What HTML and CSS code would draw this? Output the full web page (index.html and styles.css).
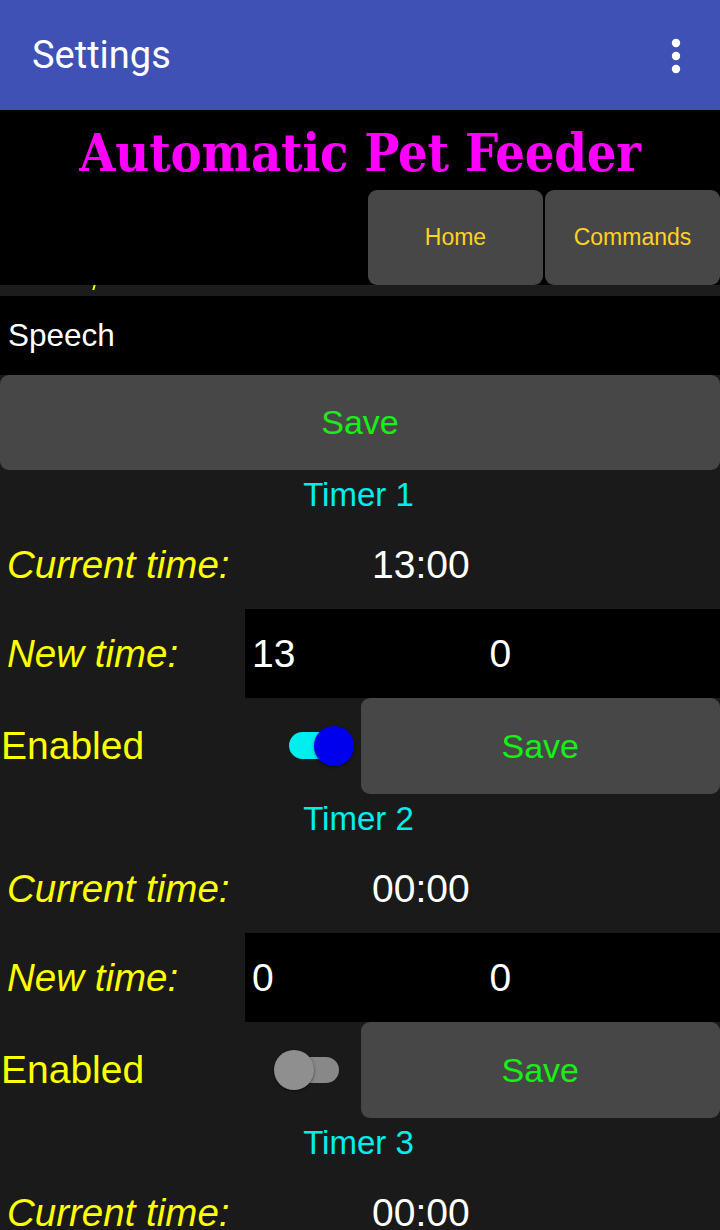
FILE: index.html
```html
<!DOCTYPE html>
<html>
<head>
<meta charset="utf-8">
<link rel="stylesheet" href="styles.css">
</head>
<body>
<header class="appbar">
  <span class="appbar-title">Settings</span>
  <svg class="menu" width="12" height="36" viewBox="0 0 12 36"><circle cx="6" cy="5" r="4.2" fill="#fff"/><circle cx="6" cy="18" r="4.2" fill="#fff"/><circle cx="6" cy="31" r="4.2" fill="#fff"/></svg>
</header>
<section class="hero">
  <h1 class="hero-title">Automatic Pet Feeder</h1>
  <nav class="nav">
    <button class="nav-btn">Home</button>
    <button class="nav-btn">Commands</button>
  </nav>
</section>
<div class="strip"><span class="tick"></span></div>
<div class="speech">Speech</div>
<button class="save-wide">Save</button>

<section class="timer">
  <div class="timer-title">Timer 1</div>
  <div class="row cur"><span class="lbl">Current time:</span><span class="val">13:00</span></div>
  <div class="row newt"><span class="lbl">New time:</span><div class="inputs"><span class="inp">13</span><span class="inp">0</span></div></div>
  <div class="row en"><span class="en-lbl">Enabled</span><span class="switch on"><span class="thumb"></span></span><button class="save">Save</button></div>
</section>

<section class="timer">
  <div class="timer-title">Timer 2</div>
  <div class="row cur"><span class="lbl">Current time:</span><span class="val">00:00</span></div>
  <div class="row newt"><span class="lbl">New time:</span><div class="inputs"><span class="inp">0</span><span class="inp">0</span></div></div>
  <div class="row en"><span class="en-lbl">Enabled</span><span class="switch off"><span class="thumb"></span></span><button class="save">Save</button></div>
</section>

<section class="timer">
  <div class="timer-title">Timer 3</div>
  <div class="row cur"><span class="lbl">Current time:</span><span class="val">00:00</span></div>
</section>
</body>
</html>
```
FILE: styles.css
```css
html, body { margin: 0; padding: 0; }
body {
  width: 720px;
  height: 1230px;
  overflow: hidden;
  background: #1a1a1a;
  font-family: "Liberation Sans", Arial, sans-serif;
}
.appbar {
  height: 110px;
  background: #3f51b5;
  display: flex;
  align-items: center;
  justify-content: space-between;
  padding: 0 38px 0 32px;
  box-sizing: border-box;
}
.appbar-title { color: #fff; font-family: Roboto, sans-serif; font-size: 38px; }
.menu { display: block; margin-top: 1px; }
.hero { background: #000; height: 175px; display: flex; flex-direction: column; }
.hero-title {
  margin: 0;
  height: 80px;
  line-height: 86px;
  text-align: center;
  color: #ff00ff;
  font-family: "DejaVu Serif Condensed", "DejaVu Serif", serif;
  font-weight: bold;
  font-size: 52px;
  letter-spacing: -0.2px;
}
.nav { display: flex; justify-content: flex-end; gap: 2px; }
.nav-btn {
  width: 175px;
  height: 95px;
  background: #474747;
  border: none;
  border-radius: 9px;
  color: #ffd21f;
  font-family: "Liberation Sans", Arial, sans-serif;
  font-size: 23px;
  padding: 0;
}
.strip { height: 11px; background: #1c1c1c; position: relative; }
.tick {
  position: absolute; left: 93px; top: 0;
  width: 2px; height: 5px; background: #ffff00; transform: skewX(-15deg);
}
.speech {
  height: 79px;
  background: #000;
  color: #fff;
  font-size: 31.5px;
  line-height: 79px;
  padding-left: 8px;
}
.save-wide, .save {
  background: #474747;
  border: none;
  border-radius: 9px;
  color: #17ef17;
  font-family: "Liberation Sans", Arial, sans-serif;
  font-size: 34px;
  padding: 0;
}
.save-wide { display: block; width: 720px; height: 95px; }
.timer-title {
  height: 50px;
  line-height: 50px;
  text-align: center;
  color: #00eeee;
  font-size: 33px;
  padding-right: 3px;
}
.row { display: flex; align-items: center; }
.cur { height: 89px; }
.lbl {
  width: 245px;
  box-sizing: border-box;
  padding-left: 7px;
  color: #ffff00;
  font-style: italic;
  font-size: 38.5px;
}
.val { color: #fff; font-size: 39px; padding-left: 127px; }
.newt { height: 89px; }
.inputs { flex: 1; height: 89px; background: #000; display: flex; }
.inp { flex: 1; color: #fff; font-size: 39px; line-height: 89px; padding-left: 7px; }
.en { height: 96px; }
.en-lbl { color: #ffff00; font-size: 39px; padding-left: 1px; width: 265px; }
.switch { width: 95px; height: 96px; position: relative; }
.switch::before {
  content: "";
  position: absolute;
  top: 34px;
  height: 27px;
  border-radius: 14px;
}
.switch.on::before { left: 23px; width: 50px; background: #00eeee; }
.switch.off::before { left: 15px; width: 58px; background: #888; top: 35px; height: 26px; }
.thumb { position: absolute; width: 40px; height: 40px; border-radius: 50%; top: 28px; }
.switch.on .thumb { left: 48px; background: #0000ee; box-shadow: 0 1px 3px rgba(0,0,0,0.5); }
.switch.off .thumb { left: 8px; background: #8f8f8f; box-shadow: 0 1px 3px rgba(0,0,0,0.5); }
.save { width: 360px; height: 96px; }
```
